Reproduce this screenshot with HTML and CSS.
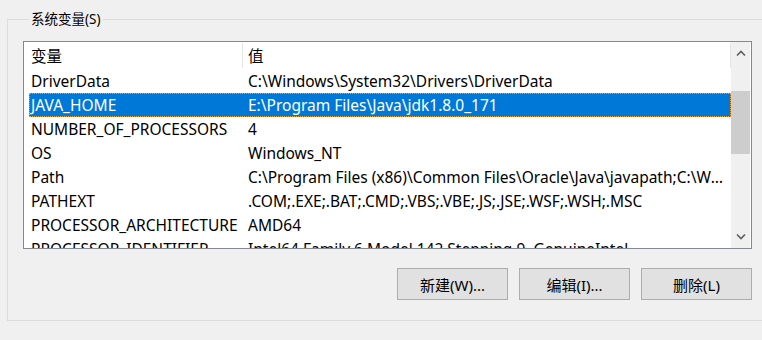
FILE: index.html
```html
<!DOCTYPE html>
<html lang="zh-CN">
<head>
  <meta charset="UTF-8">
  <title>系统变量</title>
  <link rel="stylesheet" href="styles.css">
</head>
<body>
  <fieldset class="group">
    <legend>系统变量(S)</legend>

    <div class="listbox">
      <div class="list">
        <div class="row head">
          <span class="c1">变量</span>
          <span class="c2">值</span>
        </div>
        <div class="row"><span class="c1">DriverData</span><span class="c2">C:\Windows\System32\Drivers\DriverData</span></div>
        <div class="row selected"><span class="c1">JAVA_HOME</span><span class="c2">E:\Program Files\Java\jdk1.8.0_171</span></div>
        <div class="row"><span class="c1">NUMBER_OF_PROCESSORS</span><span class="c2">4</span></div>
        <div class="row"><span class="c1">OS</span><span class="c2">Windows_NT</span></div>
        <div class="row"><span class="c1">Path</span><span class="c2">C:\Program Files (x86)\Common Files\Oracle\Java\javapath;C:\Windows\system32;C:\Windows</span></div>
        <div class="row"><span class="c1">PATHEXT</span><span class="c2">.COM;.EXE;.BAT;.CMD;.VBS;.VBE;.JS;.JSE;.WSF;.WSH;.MSC</span></div>
        <div class="row"><span class="c1">PROCESSOR_ARCHITECTURE</span><span class="c2">AMD64</span></div>
        <div class="row"><span class="c1">PROCESSOR_IDENTIFIER</span><span class="c2">Intel64 Family 6 Model 142 Stepping 9, GenuineIntel</span></div>
      </div>

      <div class="scrollbar">
        <div class="arrow">
          <svg width="10" height="6" viewBox="0 0 10 6"><path d="M1 5.5 L5 1.5 L9 5.5" fill="none" stroke="#606060" stroke-width="1.6"/></svg>
        </div>
        <div class="track">
          <div class="thumb"></div>
        </div>
        <div class="arrow">
          <svg width="10" height="6" viewBox="0 0 10 6"><path d="M1 0.5 L5 4.5 L9 0.5" fill="none" stroke="#606060" stroke-width="1.6"/></svg>
        </div>
      </div>
    </div>

    <div class="actions">
      <button>新建(W)...</button>
      <button>编辑(I)...</button>
      <button>删除(L)</button>
    </div>
  </fieldset>
</body>
</html>
```

FILE: styles.css
```css
* {
  margin: 0;
  padding: 0;
  box-sizing: border-box;
}
body {
  font-family: 'Noto Sans', 'Noto Sans CJK SC', sans-serif;
  font-size: 15.5px;
  background: #f0f0f0;
  color: #000;
  overflow: hidden;
  width: 762px;
  height: 340px;
}
.group {
  margin: 9px 0 0 7px;
  width: 800px;
  border: 1px solid #dcdcdc;
  padding: 12px 0 20px 15px;
}
.group legend {
  margin-left: 6px;
  padding: 0 2px;
  font-size: 13.5px;
  line-height: 20px;
  color: #000;
}
.listbox {
  display: flex;
  width: 729px;
  height: 208px;
  border: 1px solid #828790;
  background: #fff;
  overflow: hidden;
}
.list {
  flex: 1;
  overflow: hidden;
  padding-left: 5px;
}
.row {
  display: flex;
  align-items: center;
  height: 24px;
  white-space: nowrap;
}
.row .c1 {
  width: 219px;
  flex: none;
  padding-left: 2px;
}
.row .c2 {
  flex: 1;
  min-width: 0;
  padding-right: 6px;
  overflow: hidden;
  text-overflow: ellipsis;
}
.row.head {
  height: 27px;
  margin-left: -5px;
  padding-left: 7px;
}
.row.head .c1 {
  width: 212px;
  padding-left: 0;
  border-right: 1px solid #e5e5e5;
  align-self: stretch;
  display: flex;
  align-items: center;
  margin: 1px 0;
}
.row.head .c2 {
  padding-left: 5px;
  border-right: 1px solid #e5e5e5;
  align-self: stretch;
  display: flex;
  align-items: center;
  margin: 1px 0;
}
.row.selected {
  background: #0078d7;
  color: #fff;
  border: 1px dotted #e8a040;
}
.row.selected .c1 {
  padding-left: 1px;
}
.row.selected .c2 {
  margin-left: -1px;
}
.scrollbar {
  width: 19px;
  margin-right: 1px;
  flex: none;
  background: #f0f0f0;
  display: flex;
  flex-direction: column;
}
.arrow {
  height: 22px;
  display: flex;
  align-items: center;
  justify-content: center;
}
.track {
  flex: 1;
  padding-top: 27px;
}
.thumb {
  height: 63px;
  background: #cdcdcd;
}
.actions {
  display: flex;
  justify-content: flex-end;
  gap: 11px;
  width: 729px;
  margin-top: 19px;
}
.actions button {
  width: 111px;
  height: 32px;
  background: #e1e1e1;
  border: 1px solid #adadad;
  font-family: inherit;
  font-size: 15px;
  color: #000;
}
```
